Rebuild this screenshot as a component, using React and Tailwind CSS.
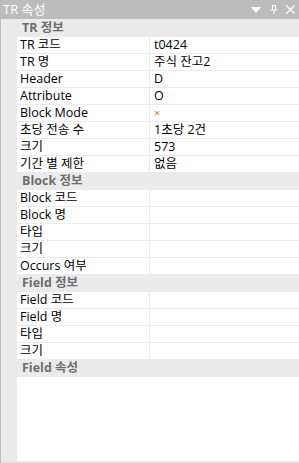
import React from 'react';

const rows = [
  { cat: 'TR 정보' },
  { name: 'TR 코드', value: 't0424' },
  { name: 'TR 명', value: '주식 잔고2' },
  { name: 'Header', value: 'D' },
  { name: 'Attribute', value: 'O' },
  { name: 'Block Mode', value: '×', mark: true },
  { name: '초당 전송 수', value: '1초당 2건' },
  { name: '크기', value: '573' },
  { name: '기간 별 제한', value: '없음' },
  { cat: 'Block 정보' },
  { name: 'Block 코드', value: '' },
  { name: 'Block 명', value: '' },
  { name: '타입', value: '' },
  { name: '크기', value: '' },
  { name: 'Occurs 여부', value: '' },
  { cat: 'Field 정보' },
  { name: 'Field 코드', value: '' },
  { name: 'Field 명', value: '' },
  { name: '타입', value: '' },
  { name: '크기', value: '' },
  { cat: 'Field 속성' },
];

const font = { fontFamily: '"Open Sans", "Noto Sans CJK KR", sans-serif' };

export default function App() {
  return (
    <div
      className="w-[299px] h-[463px] flex flex-col bg-white text-[12.5px] text-black border-l border-[#bcbcbc] overflow-hidden"
      style={font}
    >
      {/* Title bar */}
      <div className="h-[19px] shrink-0 bg-[#bcbcbc] flex items-center pl-[2px] pr-[4px] text-white text-[13px]">
        <span className="flex-1 leading-none">TR 속성</span>
        <svg width="10" height="6" viewBox="0 0 10 6" className="mr-[9px]">
          <path d="M0 0 H10 L5 6 Z" fill="white" />
        </svg>
        <svg width="8" height="9" viewBox="0 0 8 9" className="mr-[8px]">
          <path d="M2 0.5 H6 M2.5 0.5 V5 M5.5 0.5 V5 M0.5 5 H7.5 M4 5 V9" stroke="white" strokeWidth="1" fill="none" />
        </svg>
        <svg width="9" height="9" viewBox="0 0 9 9">
          <path d="M0.5 0.5 L8.5 8.5 M8.5 0.5 L0.5 8.5" stroke="white" strokeWidth="1.4" />
        </svg>
      </div>
      <div className="h-px shrink-0 bg-[#ebebeb]" />

      {/* Property grid */}
      <div className="flex-1 flex flex-col">
        {rows.map((r, i) =>
          r.cat ? (
            <div key={i} className="h-[17px] shrink-0 bg-[#ebebeb] pl-[21px] flex items-center font-bold text-[#6d6d6d]">
              {r.cat}
            </div>
          ) : (
            <div key={i} className="h-[17px] shrink-0 flex">
              <div className="w-[16px] shrink-0 bg-[#ebebeb]" />
              <div className="flex-1 flex border-b border-[#ebebeb]">
                <div className="w-[133px] shrink-0 pl-[3px] flex items-center border-r border-[#ebebeb]">{r.name}</div>
                <div className={`flex-1 pl-[4px] flex items-center ${r.mark ? 'text-[#c8783c] text-[11px]' : ''}`}>{r.value}</div>
              </div>
            </div>
          )
        )}
        <div className="flex-1 flex">
          <div className="w-[16px] shrink-0 bg-[#ebebeb]" />
          <div className="flex-1" />
        </div>
        <div className="h-[2px] shrink-0 bg-[#e3e3e3]" />
      </div>
    </div>
  );
}
